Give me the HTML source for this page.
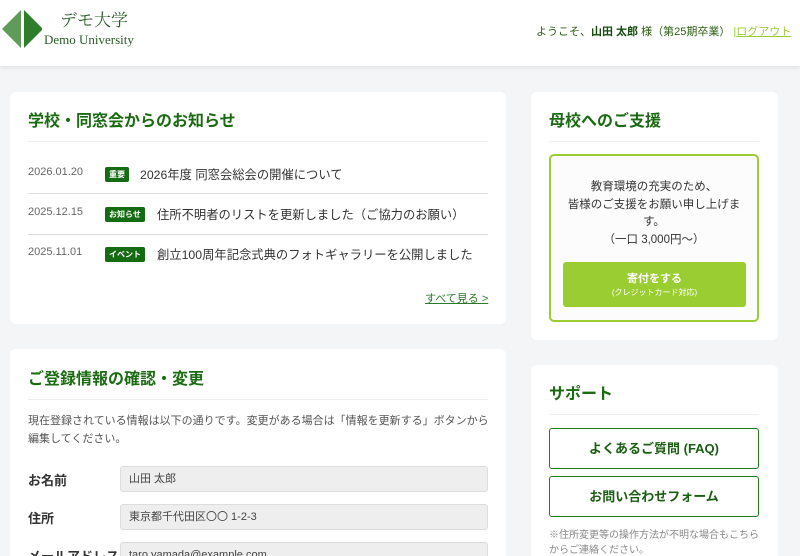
<!DOCTYPE html>
<html><head><meta charset="utf-8"><style>
*{margin:0;padding:0;box-sizing:border-box}
html,body{width:800px;height:556px;overflow:hidden}
body{background:#f4f5f7;font-family:"Liberation Sans","Noto Sans CJK JP",sans-serif;color:#333;position:relative}
.hdr{position:absolute;left:0;top:0;width:800px;height:66px;background:#fff;box-shadow:0 2px 4px rgba(0,0,0,.08)}
.card{position:absolute;background:#fff;border-radius:6px}
.t{position:absolute;font-size:16px;font-weight:bold;color:#1a6b12;line-height:20px}
.hr{position:absolute;height:1px;background:#eee}
.ab{position:absolute;white-space:nowrap}
.date{font-size:11px;color:#666}
.badge{font-size:8px;color:#fff;background:#156b12;border-radius:2px;padding:1px 4px;font-weight:bold;line-height:13px}
.nt{font-size:12.3px;color:#333}
.sep{position:absolute;left:28px;width:460px;height:1px;background:#ddd}
.lbl{font-size:13px;font-weight:bold;color:#333}
.inp{position:absolute;left:120px;width:368px;height:26px;background:#eeeeee;border:1px solid #ddd;border-radius:3px;font-size:11px;color:#444;padding-left:8px;line-height:24px}
.sbtn{position:absolute;left:549px;width:210px;border:1px solid #1f7a1a;border-radius:3px;text-align:center;font-size:13px;font-weight:bold;color:#1a5e12}
</style></head><body>
<div class="hdr">
<svg style="position:absolute;left:2px;top:10px" width="40" height="38"><polygon points="0,19 19,0 19,38" fill="#5f9c5a"/><polygon points="22,0 41,19 22,38" fill="#2e7d2a"/></svg>
<div class="ab" style="left:60px;top:11px;font-family:'Liberation Serif','Noto Serif CJK SC',serif;font-size:17px;color:#2c5a2a;line-height:20px">デモ大学</div>
<div class="ab" style="left:44px;top:32px;font-family:'Liberation Serif',serif;font-size:13px;color:#2c5a2a;line-height:16px">Demo University</div>
<div class="ab" style="left:536px;top:24px;font-size:11px;color:#2a5e12;line-height:16px">ようこそ、<b style="color:#174d10">山田 太郎</b> 様（第25期卒業） <span style="color:#9acd32">|</span><span style="color:#9acd32;text-decoration:underline">ログアウト</span></div>
</div>

<div class="card" style="left:10px;top:92px;width:496px;height:232px"></div>
<div class="t" style="left:28px;top:112px">学校・同窓会からのお知らせ</div>
<div class="hr" style="left:28px;top:141px;width:460px"></div>
<div class="ab date" style="left:28px;top:166px">2026.01.20</div>
<div class="ab badge" style="left:105px;top:167px">重要</div>
<div class="ab nt" style="left:140px;top:165px">2026年度 同窓会総会の開催について</div>
<div class="sep" style="top:193px"></div>
<div class="ab date" style="left:28px;top:206px">2025.12.15</div>
<div class="ab badge" style="left:105px;top:207px">お知らせ</div>
<div class="ab nt" style="left:157px;top:205px">住所不明者のリストを更新しました（ご協力のお願い）</div>
<div class="sep" style="top:234px"></div>
<div class="ab date" style="left:28px;top:246px">2025.11.01</div>
<div class="ab badge" style="left:105px;top:247px">イベント</div>
<div class="ab nt" style="left:157px;top:245px">創立100周年記念式典のフォトギャラリーを公開しました</div>
<div class="ab" style="left:425px;top:290px;font-size:11px;color:#2a7a2a;text-decoration:underline">すべて見る &gt;</div>

<div class="card" style="left:531px;top:92px;width:247px;height:248px"></div>
<div class="t" style="left:549px;top:112px">母校へのご支援</div>
<div class="hr" style="left:549px;top:141px;width:210px"></div>
<div style="position:absolute;left:549px;top:154px;width:210px;height:168px;border:2px solid #9acd32;border-radius:5px;background:#fcfcfc"></div>
<div style="position:absolute;left:562px;top:179px;width:184px;text-align:center;font-size:11.5px;line-height:17.5px;color:#333">教育環境の充実のため、<br>皆様のご支援をお願い申し上げます。<br>（一口 3,000円〜）</div>
<div style="position:absolute;left:563px;top:262px;width:183px;height:45px;background:#9acd32;border-radius:3px;text-align:center;color:#fff">
<div style="font-size:11px;font-weight:bold;margin-top:10px;line-height:15px">寄付をする</div>
<div style="font-size:8px;line-height:11px">(クレジットカード対応)</div></div>

<div class="card" style="left:10px;top:349px;width:496px;height:220px"></div>
<div class="t" style="left:28px;top:370px">ご登録情報の確認・変更</div>
<div class="hr" style="left:28px;top:399px;width:460px"></div>
<div class="ab" style="left:28px;top:412px;font-size:11px;color:#555;line-height:18px;white-space:normal;width:462px">現在登録されている情報は以下の通りです。変更がある場合は「情報を更新する」ボタンから編集してください。</div>
<div class="ab lbl" style="left:28px;top:470px">お名前</div>
<div class="inp" style="top:466px">山田 太郎</div>
<div class="ab lbl" style="left:28px;top:508px">住所</div>
<div class="inp" style="top:504px">東京都千代田区〇〇 1-2-3</div>
<div class="ab lbl" style="left:28px;top:546px">メールアドレス</div>
<div class="inp" style="top:542px">taro.yamada@example.com</div>

<div class="card" style="left:531px;top:365px;width:247px;height:200px"></div>
<div class="t" style="left:549px;top:385px">サポート</div>
<div class="hr" style="left:549px;top:414px;width:210px"></div>
<div class="sbtn" style="top:428px;height:41px;line-height:39px">よくあるご質問 (FAQ)</div>
<div class="sbtn" style="top:476px;height:41px;line-height:39px">お問い合わせフォーム</div>
<div class="ab" style="left:549px;top:528px;font-size:10px;color:#888;line-height:15px;white-space:normal;width:212px">※住所変更等の操作方法が不明な場合もこちらからご連絡ください。</div>
</body></html>
